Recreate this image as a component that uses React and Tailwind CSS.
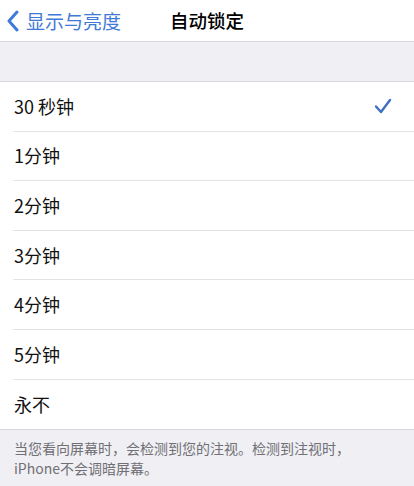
const options = ['30 秒钟', '1分钟', '2分钟', '3分钟', '4分钟', '5分钟', '永不'];

const font = { fontFamily: '"Noto Sans CJK SC", "Noto Sans", sans-serif' };

export default function App() {
  return (
    <div className="w-[414px] h-[486px] bg-[#efeff4] overflow-hidden" style={font}>
      <div className="relative h-[42px] bg-white border-b border-[#d8d8dc] flex items-center">
        <div className="flex items-center pl-[6px] text-[#3f7ad8]">
          <svg width="14" height="22" viewBox="0 0 14 22" className="mr-[6px]">
            <path d="M11 2 L3 11 L11 20" fill="none" stroke="currentColor" strokeWidth="3" strokeLinecap="round" strokeLinejoin="round" />
          </svg>
          <span className="text-[19px] leading-none">显示与亮度</span>
        </div>
        <div className="absolute left-0 right-0 top-0 h-full flex items-center justify-center pointer-events-none">
          <span className="text-[18.5px] leading-none text-black font-medium">自动锁定</span>
        </div>
      </div>
      <div className="h-[39px]" />
      <div className="bg-white border-t border-b border-[#d8d8dc]">
        {options.map((o, i) => (
          <div key={o} className="pl-[13px]">
            <div className={`h-[49.6px] flex items-center justify-between pr-[22px] ${i < options.length - 1 ? 'border-b border-[#e2e2e6]' : ''}`}>
              <span className="text-[18px] text-[#111] pl-px">{o}</span>
              {i === 0 && (
                <svg width="18" height="16" viewBox="0 0 18 16">
                  <path d="M2 8.5 L7 14 L16 2" fill="none" stroke="#3f6ec4" strokeWidth="2.4" strokeLinecap="round" strokeLinejoin="round" />
                </svg>
              )}
            </div>
          </div>
        ))}
      </div>
      <div className="px-[14px] pt-[8px] text-[14px] leading-[20px] text-[#707075]">
        当您看向屏幕时，会检测到您的注视。检测到注视时，
        <br />
        iPhone不会调暗屏幕。
      </div>
    </div>
  );
}
